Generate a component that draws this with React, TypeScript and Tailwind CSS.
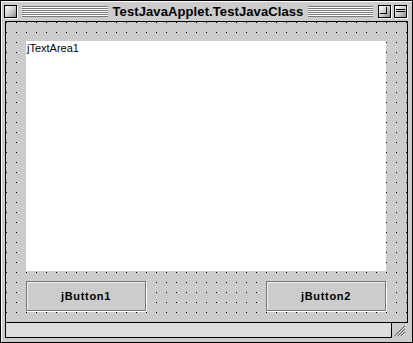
const font = { fontFamily: '"Liberation Sans", Arial, sans-serif' };

const Stripes = ({ className }: { className: string }) => (
  <div
    className={`h-[11px] bg-[repeating-linear-gradient(to_bottom,#777_0px,#777_1px,#fff_1px,#fff_2px)] ${className}`}
  />
);

const BoxButton = ({ children }: { children?: React.ReactNode }) => (
  <div className="relative h-[13px] w-[13px] shrink-0 border border-black bg-[linear-gradient(135deg,#fff_0%,#ccc_55%,#888_100%)] shadow-[1px_1px_0_#fff]">
    {children}
  </div>
);

const JButton = ({ label }: { label: string }) => (
  <div className="flex h-[30px] w-[120px] items-center justify-center border border-[#777] bg-[#ccc] shadow-[1px_1px_0_#fff,inset_1px_1px_0_#eee]">
    <span className="text-[11px] font-bold tracking-[0.7px] text-black">{label}</span>
  </div>
);

export default function App() {
  return (
    <div
      className="flex h-[343px] w-[413px] flex-col border border-black bg-[#ccc] shadow-[inset_1px_1px_0_#fff]"
      style={font}
    >
      {/* title bar */}
      <div className="flex h-[20px] items-center pl-[3px] pr-[5px]">
        <BoxButton />
        <Stripes className="ml-[5px] w-[86px]" />
        <div className="flex-1 text-center text-[13px] font-bold leading-none tracking-[0.1px] text-black">
          TestJavaApplet.TestJavaClass
        </div>
        <Stripes className="mr-[5px] w-[65px]" />
        <BoxButton>
          <div className="absolute left-[1px] top-[1px] h-[7px] w-[7px] border-b border-r border-black" />
        </BoxButton>
        <div className="w-[3px]" />
        <BoxButton>
          <div className="absolute left-[1px] right-[1px] top-[3px] h-[3px] border-y border-black" />
        </BoxButton>
      </div>

      {/* content */}
      <div className="mx-[4px] flex flex-1 flex-col">
        <div className="flex flex-1 flex-col border border-black bg-[#ccc] bg-[conic-gradient(from_270deg_at_1px_1px,#000_90deg,transparent_0)] bg-[length:10px_10px] pl-[20px] pr-[21px] pt-[19px]">
          <div className="h-[230px] bg-white px-[1px] pt-[1px] text-[11px] leading-[12px] text-black">
            jTextArea1
          </div>
          <div className="mt-[10px] flex justify-between">
            <JButton label="jButton1" />
            <JButton label="jButton2" />
          </div>
        </div>
        <div className="flex h-[15px]">
          <div className="flex-1 border-x border-b border-black bg-[#ddd]" />
          <div className="flex w-[16px] items-center justify-center">
            <svg width="12" height="12" viewBox="0 0 12 12">
              <path d="M1 11 L11 1 M4 11 L11 4 M7 11 L11 7" stroke="#666" strokeWidth="1.2" />
              <path d="M2 11 L11 2 M5 11 L11 5 M8 11 L11 8" stroke="#fff" strokeWidth="0.8" />
            </svg>
          </div>
        </div>
        <div className="h-[4px]" />
      </div>
    </div>
  );
}
